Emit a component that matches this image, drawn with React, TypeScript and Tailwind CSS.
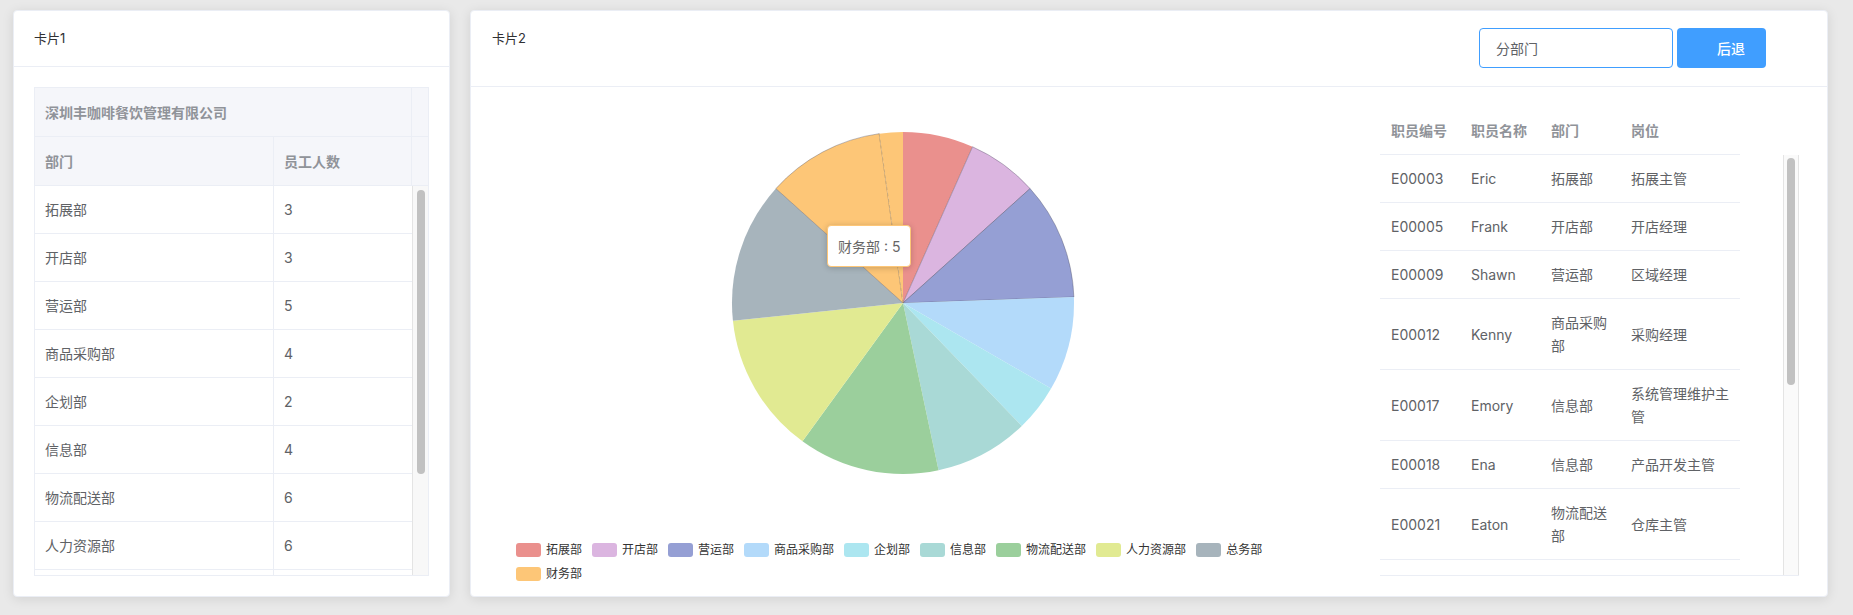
import React from "react";

const depts: { name: string; value: number; color: string }[] = [
  { name: "拓展部", value: 3, color: "#ea908d" },
  { name: "开店部", value: 3, color: "#dbb5e0" },
  { name: "营运部", value: 5, color: "#959fd4" },
  { name: "商品采购部", value: 4, color: "#b3dafa" },
  { name: "企划部", value: 2, color: "#ace6f0" },
  { name: "信息部", value: 4, color: "#a9d9d6" },
  { name: "物流配送部", value: 6, color: "#9bcf9c" },
  { name: "人力资源部", value: 6, color: "#e1ea92" },
  { name: "总务部", value: 6, color: "#a7b4bc" },
  { name: "财务部", value: 5, color: "#fdc677" },
];

const employees = [
  { id: "E00003", name: "Eric", dept: "拓展部", post: "拓展主管" },
  { id: "E00005", name: "Frank", dept: "开店部", post: "开店经理" },
  { id: "E00009", name: "Shawn", dept: "营运部", post: "区域经理" },
  { id: "E00012", name: "Kenny", dept: "商品采购部", post: "采购经理" },
  { id: "E00017", name: "Emory", dept: "信息部", post: "系统管理维护主管" },
  { id: "E00018", name: "Ena", dept: "信息部", post: "产品开发主管" },
  { id: "E00021", name: "Eaton", dept: "物流配送部", post: "仓库主管" },
];

const CX = 412;
const CY = 196;
const R = 171;
const TOTAL = 45;

const pt = (deg: number) => {
  const a = (deg * Math.PI) / 180;
  return [CX + R * Math.sin(a), CY - R * Math.cos(a)];
};

const slicePath = (from: number, to: number) => {
  const [x1, y1] = pt(from);
  const [x2, y2] = pt(to);
  const large = to - from > 180 ? 1 : 0;
  return `M${CX},${CY} L${x1},${y1} A${R},${R} 0 ${large} 1 ${x2},${y2} Z`;
};

const outlined = ["开店部", "营运部", "财务部"];

const PieChart = () => {
  let acc = 0;
  const slices = depts.map((d) => {
    const from = (acc / TOTAL) * 360;
    acc += d.value;
    const to = (acc / TOTAL) * 360;
    return { ...d, from, to };
  });
  const [dx, dy] = pt(352);

  return (
    <svg width={869} height={436} className="block">
      {slices.map((s) => (
        <path
          key={s.name}
          d={slicePath(s.from, s.to)}
          fill={s.color}
          stroke={outlined.includes(s.name) ? "rgba(70,70,90,0.45)" : "none"}
          strokeWidth={0.8}
        />
      ))}
      {/* last sliver */}
      <path d={slicePath(352, 360)} fill="#fdc677" />
      <line x1={CX} y1={CY} x2={dx} y2={dy} stroke="#c8a672" strokeWidth={0.8} strokeDasharray="3 3" />
    </svg>
  );
};

const DeptCard = () => (
  <div className="w-[437px] h-[587px] shrink-0 bg-white rounded-[4px] border border-[#ebeef5] shadow-[0_2px_12px_0_rgba(0,0,0,0.1)] flex flex-col">
    <div className="h-[56px] shrink-0 flex items-center px-5 border-b border-[#ebeef5] text-[13px] text-[#303133]">
      卡片1
    </div>
    <div className="p-5 flex-1">
      <div className="h-[489px] border border-[#ebeef5] flex flex-col overflow-hidden text-[14px]">
        <div className="h-[49px] shrink-0 flex bg-[#f5f6fa] border-b border-[#ebeef5] font-bold text-[#909399]">
          <div className="flex-1 flex items-center pl-[10px] border-r border-[#ebeef5]">深圳丰咖啡餐饮管理有限公司</div>
          <div className="w-[16px]" />
        </div>
        <div className="h-[49px] shrink-0 flex bg-[#f5f6fa] border-b border-[#ebeef5] font-bold text-[#909399]">
          <div className="w-[239px] flex items-center pl-[10px] border-r border-[#ebeef5]">部门</div>
          <div className="flex-1 flex items-center pl-[10px] border-r border-[#ebeef5]">员工人数</div>
          <div className="w-[16px]" />
        </div>
        <div className="flex flex-1 overflow-hidden">
          <div className="flex-1 overflow-hidden text-[#606266]">
            {depts.slice(0, 8).map((d) => (
              <div key={d.name} className="h-[48px] flex border-b border-[#ebeef5]">
                <div className="w-[239px] flex items-center pl-[10px] border-r border-[#ebeef5]">{d.name}</div>
                <div className="flex-1 flex items-center pl-[10px]">{d.value}</div>
              </div>
            ))}
            {/* next row, scrolled out of view */}
            <div className="h-[48px] flex">
              <div className="w-[239px] border-r border-[#ebeef5]" />
            </div>
          </div>
          <div className="w-[16px] shrink-0 bg-[#f8f8f8] border-l border-[#e4e4e4] flex justify-center">
            <div className="w-[8px] h-[284px] mt-[4px] rounded-full bg-[#c1c1c1]" />
          </div>
        </div>
      </div>
    </div>
  </div>
);

const ChartCard = () => (
  <div className="w-[1358px] h-[587px] shrink-0 bg-white rounded-[4px] border border-[#ebeef5] shadow-[0_2px_12px_0_rgba(0,0,0,0.1)] flex flex-col">
    <div className="h-[76px] shrink-0 flex justify-between border-b border-[#ebeef5]">
      <div className="pl-[21px] pt-[19px] text-[13px] leading-[16px] text-[#303133]">卡片2</div>
      <div className="flex gap-[4px] mt-[17px] mr-[61px] h-[40px]">
        <div className="w-[194px] h-[40px] border border-[#409eff] rounded-[4px] flex items-center pl-[16px] text-[14px] text-[#606266]">
          分部门
        </div>
        <button className="w-[89px] h-[40px] rounded-[4px] bg-[#409eff] text-white text-[14px] font-medium text-left pl-[40px]">
          后退
        </button>
      </div>
    </div>
    <div className="flex px-5 pt-5">
      <div className="w-[869px] h-[469px] relative shrink-0">
        <PieChart />
        <div className="w-[785px] ml-[25px] flex flex-wrap gap-x-[10px] gap-y-[10px]">
          {depts.map((d) => (
            <div key={d.name} className="flex items-center gap-[5px] h-[14px] text-[12px] text-[#333]">
              <span className="w-[25px] h-[14px] rounded-[3px]" style={{ background: d.color }} />
              <span>{d.name}</span>
            </div>
          ))}
        </div>
        <div className="absolute left-[336px] top-[118px] h-[42px] px-[10px] flex items-center bg-white border border-[#fdc677] rounded-[4px] shadow-[0_1px_6px_rgba(0,0,0,0.2)] text-[14px] text-[#666] whitespace-nowrap">
          财务部 : 5
        </div>
      </div>
      <div className="w-[419px] ml-[20px] shrink-0 text-[14px]">
        <div className="w-[360px] h-[48px] flex border-b border-[#ebeef5] font-bold text-[#909399]">
          <div className="w-[80px] flex items-center pl-[11px]">职员编号</div>
          <div className="w-[80px] flex items-center pl-[11px]">职员名称</div>
          <div className="w-[80px] flex items-center pl-[11px]">部门</div>
          <div className="w-[120px] flex items-center pl-[11px]">岗位</div>
        </div>
        <div className="h-[421px] flex border-b border-[#ebeef5] overflow-hidden">
          <div className="w-[360px] overflow-hidden text-[#606266]">
            {employees.map((e) => (
              <div key={e.id} className="flex border-b border-[#ebeef5] py-[12px] leading-[23px]">
                <div className="w-[80px] flex items-center pl-[11px] pr-[9px]">{e.id}</div>
                <div className="w-[80px] flex items-center pl-[11px] pr-[9px]">{e.name}</div>
                <div className="w-[80px] flex items-center pl-[11px] pr-[9px]">{e.dept}</div>
                <div className="w-[120px] flex items-center pl-[11px] pr-[9px]">{e.post}</div>
              </div>
            ))}
          </div>
          <div className="flex-1" />
          <div className="w-[16px] bg-[#fafafa] border-l border-r border-[#e4e4e4] flex justify-center">
            <div className="w-[8px] h-[227px] mt-[3px] rounded-full bg-[#c1c1c1]" />
          </div>
        </div>
      </div>
    </div>
  </div>
);

export default function App() {
  return (
    <div
      className="w-[1853px] h-[615px] bg-[#e9e9e9] flex gap-[20px] pl-[13px] pt-[10px] overflow-hidden"
      style={{ fontFamily: 'Inter, "Noto Sans CJK SC", sans-serif' }}
    >
      <DeptCard />
      <ChartCard />
    </div>
  );
}
